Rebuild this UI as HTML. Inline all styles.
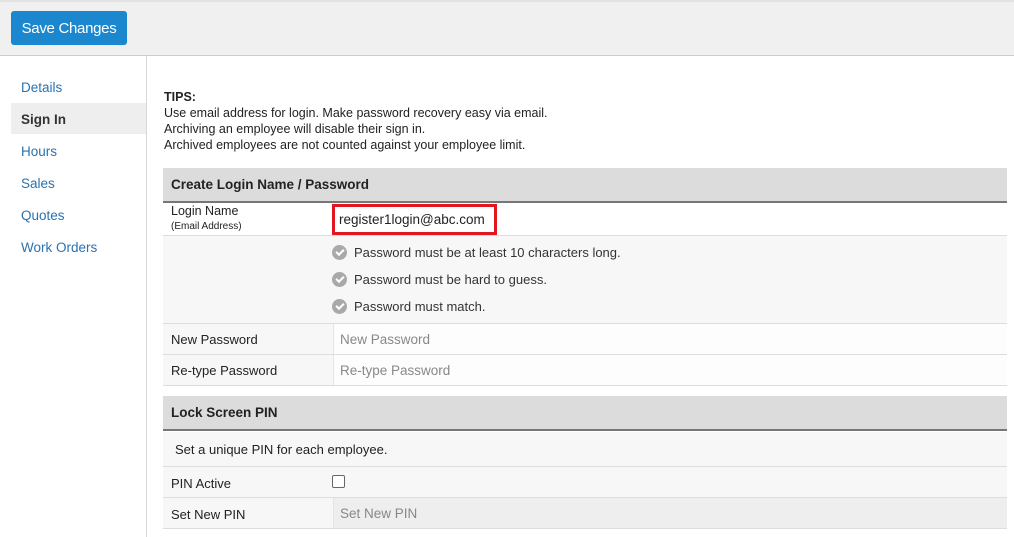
<!DOCTYPE html>
<html><head><meta charset="utf-8"><style>
*{box-sizing:border-box;margin:0;padding:0}
body{width:1014px;height:537px;overflow:hidden;background:#fff;font-family:"Liberation Sans",sans-serif;font-size:13px;color:#222;position:relative}
.a{position:absolute}
.top{left:0;top:0;width:1014px;height:56px;background:#f0f0f0;border-bottom:1px solid #ccc;border-top:2px solid #e2e2e2}
.btn{left:11px;top:11px;width:116px;height:34px;background:#1b87cf;border-radius:3px;color:#fff;font-size:15px;line-height:35px;text-align:center;letter-spacing:-0.3px}
.side{left:0;top:56px;width:147px;height:481px;border-right:1px solid #d8d8d8}
.nav{left:21px;color:#2a72b0;font-size:13.5px}
.hdr{left:163px;width:844px;height:35px;background:#dcdcdc;border-bottom:2px solid #777;font-weight:bold;padding-left:8px;line-height:34px;font-size:13.5px}
.row{left:163px;width:844px;border-bottom:1px solid #ddd;background:#f7f7f7}
.lbl{left:8px;font-size:13px}
.inp{left:170px;top:0;bottom:0;right:0;background:#fdfdfd;border-left:1px solid #e5e5e5;color:#888;padding-left:6px;font-size:13.5px}
.chk{left:169px;width:15px;height:15px;border-radius:50%;background:#a9a9a9}
.chk:after{content:"";position:absolute;left:4px;top:4px;width:6px;height:3px;border-left:2px solid #fff;border-bottom:2px solid #fff;transform:rotate(-45deg)}
.req{left:191px;font-size:13px;color:#333}
</style></head><body>
<div class="a top"></div>
<div class="a btn">Save Changes</div>
<div class="a side"></div>
<div class="a" style="left:11px;top:103px;width:135px;height:31px;background:#eee"></div>
<div class="a nav" style="top:80px">Details</div>
<div class="a nav" style="top:112px;color:#333;font-weight:bold">Sign In</div>
<div class="a nav" style="top:144px">Hours</div>
<div class="a nav" style="top:176px">Sales</div>
<div class="a nav" style="top:208px">Quotes</div>
<div class="a nav" style="top:240px">Work Orders</div>

<div class="a" style="left:164px;top:89px;line-height:16px;font-size:12.5px"><b>TIPS:</b><br>Use email address for login. Make password recovery easy via email.<br>Archiving an employee will disable their sign in.<br>Archived employees are not counted against your employee limit.</div>

<div class="a hdr" style="top:168px">Create Login Name / Password</div>
<div class="a row" style="top:203px;height:33px;background:#fff">
<div class="a lbl" style="top:1px;font-size:12.5px">Login Name</div>
<div class="a lbl" style="top:18px;font-size:10px">(Email Address)</div>
<div class="a" style="left:169px;top:1px;width:165px;height:31px;border:3px solid #e3151f;background:#fff;padding-left:4px;line-height:25px;font-size:13.5px">register1login@abc.com</div>
</div>
<div class="a row" style="top:236px;height:88px">
<div class="a chk" style="top:9px"></div><div class="a req" style="top:9px">Password must be at least 10 characters long.</div>
<div class="a chk" style="top:36px"></div><div class="a req" style="top:36px">Password must be hard to guess.</div>
<div class="a chk" style="top:63px"></div><div class="a req" style="top:63px">Password must match.</div>
</div>
<div class="a row" style="top:324px;height:31px">
<div class="a lbl" style="top:8px">New Password</div>
<div class="a inp" style="line-height:32px">New Password</div></div>
<div class="a row" style="top:355px;height:31px">
<div class="a lbl" style="top:8px">Re-type Password</div>
<div class="a inp" style="line-height:32px">Re-type Password</div></div>

<div class="a hdr" style="top:396px">Lock Screen PIN</div>
<div class="a row" style="top:432px;height:35px">
<div class="a lbl" style="left:12px;top:10px">Set a unique PIN for each employee.</div></div>
<div class="a row" style="top:467px;height:31px">
<div class="a lbl" style="top:9px">PIN Active</div>
<div class="a" style="left:169px;top:8px;width:13px;height:13px;border:1px solid #666;border-radius:2px;background:#fff"></div></div>
<div class="a row" style="top:498px;height:31px">
<div class="a lbl" style="top:9px">Set New PIN</div>
<div class="a inp" style="line-height:32px;background:#eee">Set New PIN</div></div>
</body></html>
